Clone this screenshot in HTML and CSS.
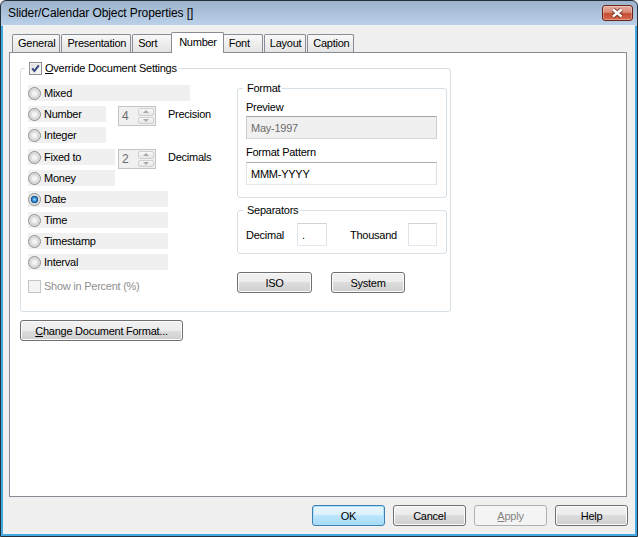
FILE: index.html
```html
<!DOCTYPE html>
<html lang="en">
<head>
  <meta charset="UTF-8">
  <title>Slider/Calendar Object Properties []</title>
  <link rel="stylesheet" href="styles.css">
</head>
<body>
  <div class="window">
    <div class="titlebar">
      <span class="title">Slider/Calendar Object Properties []</span>
      <button class="close" title="Close">
        <svg width="29" height="14" viewBox="0 0 29 14">
          <path d="M10 3.5 L18.5 10.5 M18.5 3.5 L10 10.5" stroke="#4a1b12" stroke-width="4.6" fill="none" opacity="0.6"/>
          <path d="M10 3.5 L18.5 10.5 M18.5 3.5 L10 10.5" stroke="#fff" stroke-width="2.4" fill="none"/>
        </svg>
      </button>
    </div>

    <div class="client">
      <div class="tabs">
        <div class="tab">General</div>
        <div class="tab">Presentation</div>
        <div class="tab">Sort</div>
        <div class="tab active">Number</div>
        <div class="tab">Font</div>
        <div class="tab">Layout</div>
        <div class="tab">Caption</div>
      </div>

      <div class="panel">
        <fieldset class="group main-group">
          <legend>
            <span class="check">
              <svg width="11" height="11" viewBox="0 0 11 11">
                <path d="M2.2 5.4 L4.4 8 L8.8 2.4" stroke="#33457e" stroke-width="2" fill="none"/>
              </svg>
            </span>
            <span><u>O</u>verride Document Settings</span>
          </legend>

          <div class="cols">
            <div class="types">
              <div class="opt-row">
                <label class="opt w-wide"><input type="radio" name="fmt">Mixed</label>
              </div>
              <div class="opt-row spin-row">
                <label class="opt w-short"><input type="radio" name="fmt">Number</label>
                <div class="spin">
                  <span class="spin-val">4</span>
                  <span class="spin-btns"><i class="up"></i><i class="down"></i></span>
                </div>
                <span class="spin-label">Precision</span>
              </div>
              <div class="opt-row">
                <label class="opt w-short"><input type="radio" name="fmt">Integer</label>
              </div>
              <div class="opt-row spin-row fixed">
                <label class="opt w-mid"><input type="radio" name="fmt">Fixed to</label>
                <div class="spin">
                  <span class="spin-val">2</span>
                  <span class="spin-btns"><i class="up"></i><i class="down"></i></span>
                </div>
                <span class="spin-label">Decimals</span>
              </div>
              <div class="opt-row">
                <label class="opt w-mid"><input type="radio" name="fmt">Money</label>
              </div>
              <div class="opt-row">
                <label class="opt w-long"><input type="radio" name="fmt" checked>Date</label>
              </div>
              <div class="opt-row">
                <label class="opt w-long"><input type="radio" name="fmt">Time</label>
              </div>
              <div class="opt-row">
                <label class="opt w-long"><input type="radio" name="fmt">Timestamp</label>
              </div>
              <div class="opt-row">
                <label class="opt w-long"><input type="radio" name="fmt">Interval</label>
              </div>
              <div class="percent">
                <span class="check disabled"></span>
                <span>Show in Percent (%)</span>
              </div>
            </div>

            <div class="format-col">
              <fieldset class="group fmt">
                <legend>Format</legend>
                <div class="lbl">Preview</div>
                <input class="field readonly" type="text" value="May-1997" readonly>
                <div class="lbl lbl-gap">Format Pattern</div>
                <input class="field pattern" type="text" value="MMM-YYYY">
              </fieldset>

              <fieldset class="group seps">
                <legend>Separators</legend>
                <div class="sep-row">
                  <span class="sep-lbl dec">Decimal</span>
                  <input class="field small" type="text" value=".">
                  <span class="sep-lbl thou">Thousand</span>
                  <input class="field small thin" type="text" value="">
                </div>
              </fieldset>

              <div class="fmt-buttons">
                <button class="btn iso">ISO</button>
                <button class="btn system">System</button>
              </div>
            </div>
          </div>
        </fieldset>

        <button class="btn change"><u>C</u>hange Document Format...</button>
      </div>

      <div class="footer">
        <button class="btn default">OK</button>
        <button class="btn">Cancel</button>
        <button class="btn" disabled><u>A</u>pply</button>
        <button class="btn">Help</button>
      </div>
    </div>
  </div>
</body>
</html>
```

FILE: styles.css
```css
* {
  box-sizing: border-box;
}

body {
  margin: 0;
  background: #f0f0f0;
  font-family: "Liberation Sans", Arial, sans-serif;
  font-size: 11px;
  letter-spacing: -0.25px;
  color: #000;
}

.window {
  width: 638px;
  height: 537px;
  border: 1px solid #22303d;
  border-radius: 6px 6px 0 0;
  background: linear-gradient(#9db3cc, #bcd2ea 25px, #44a9e1 25px);
  display: flex;
  flex-direction: column;
}

.titlebar {
  height: 24px;
  display: flex;
  align-items: flex-start;
  justify-content: space-between;
  padding-left: 7px;
}

.title {
  font-size: 12px;
  letter-spacing: -0.1px;
  line-height: 25px;
}

.close {
  width: 31px;
  height: 16px;
  margin: 4px 4px 0 0;
  padding: 0;
  border: 1px solid #6b2418;
  border-radius: 3px;
  background: linear-gradient(#e5ae9f, #d98a76 45%, #c44b30 55%, #d56b50);
  box-shadow: inset 0 0 0 1px rgba(255, 255, 255, 0.3);
}

.close svg {
  display: block;
}

.client {
  flex: 1;
  margin: 0 2px 2px;
  background: #f0f0f0;
  display: flex;
  flex-direction: column;
}

/* tabs */

.tabs {
  display: flex;
  align-items: flex-end;
  height: 20px;
  margin: 7px 0 0 9px;
}

.tab {
  height: 18px;
  min-width: 40px;
  padding: 0 4px 0 5px;
  margin-right: 1px;
  border: 1px solid #898c95;
  border-bottom: 0;
  border-radius: 2px 2px 0 0;
  background: linear-gradient(#f8f8f8, #e4e4e4);
  line-height: 17px;
  white-space: nowrap;
}

.tab.active {
  position: relative;
  z-index: 1;
  height: 21px;
  margin: 0 -1px -1px -2px;
  padding: 0 6px 0 7px;
  background: #fff;
  line-height: 18px;
}

.panel {
  width: 618px;
  height: 445px;
  margin-left: 6px;
  padding: 9px 0 0 10px;
  border: 1px solid #898c95;
  background: #fff;
}

/* group boxes */

.group {
  margin: 0;
  min-width: 0;
  border: 1px solid #d5dfe5;
  border-radius: 3px;
}

.group legend {
  margin-left: -3px;
  padding: 0 1px;
  line-height: 13px;
}

.main-group {
  width: 431px;
  padding: 7px 3px 17px 7px;
}

.main-group legend {
  display: flex;
  align-items: center;
  gap: 3px;
  padding: 0 2px 0 4px;
}

.cols {
  display: grid;
  grid-template-columns: 209px 210px;
}

.types {
  display: flex;
  flex-direction: column;
  gap: 5px;
  padding-top: 3px;
}

.opt-row {
  display: flex;
  height: 16px;
}

.opt-row.fixed {
  margin-top: 1px;
}

.spin-row {
  display: grid;
  grid-template-columns: 90px 38px auto;
  grid-template-rows: 16px;
  align-items: start;
}

.opt {
  display: flex;
  align-items: center;
  height: 16px;
  background: #f0f0f0;
}

.w-wide { width: 162px; }
.w-short { width: 78px; }
.w-mid { width: 87px; }
.w-long { width: 140px; }

.opt input {
  appearance: none;
  width: 13px;
  height: 13px;
  margin: 0 3px 0 0;
  border: 1px solid #8e8f8f;
  border-radius: 50%;
  background: radial-gradient(circle, #fbfbfb 0, #ececec 2.5px, #d2d2d2 4.5px, #f3f3f3 6px);
}

.opt input:checked {
  background: radial-gradient(circle, #b5e4fd 0, #3a93d8 1.8px, #11508f 3.4px, #d2d2d2 4px, #f3f3f3 6px);
}

.spin {
  height: 20px;
  display: flex;
  justify-content: space-between;
  padding: 1px;
  border: 1px solid #c4c4c4;
  background: #f0f0f0;
  color: #6d6d6d;
}

.spin-val {
  padding-left: 2px;
  line-height: 16px;
  font-size: 12px;
}

.spin-btns {
  width: 16px;
  display: flex;
  flex-direction: column;
  gap: 1px;
}

.spin-btns i {
  flex: 1;
  display: flex;
  align-items: center;
  justify-content: center;
  border: 1px solid #d0d0d0;
  border-radius: 2px;
  background: linear-gradient(#f8f8f8, #e6e6e6);
}

.spin-btns i::after {
  content: "";
  border-left: 3px solid transparent;
  border-right: 3px solid transparent;
  border-bottom: 3px solid #a9a9a9;
}

.spin-btns i.down::after {
  border-bottom: 0;
  border-top: 3px solid #a9a9a9;
}

.spin-label {
  margin-left: 12px;
  line-height: 16px;
}

.percent {
  display: flex;
  align-items: center;
  gap: 3px;
  height: 16px;
  margin-top: 3px;
  color: #8f8f8f;
}

.check {
  width: 13px;
  height: 13px;
  display: flex;
  align-items: center;
  justify-content: center;
  border: 1px solid #8e8f8f;
  background: linear-gradient(135deg, #dadada, #fdfdfd);
  box-shadow: inset 0 0 0 1px #f2f2f2;
}

.check.disabled {
  border-color: #c5c5c5;
  background: #f4f4f4;
  box-shadow: none;
}

/* format column */

.format-col {
  display: flex;
  flex-direction: column;
  align-items: flex-start;
}

.fmt {
  width: 210px;
  padding: 6px 9px 12px 8px;
}

.lbl {
  line-height: 13px;
}

.lbl-gap {
  margin-top: 7px;
}

.field {
  display: block;
  width: 191px;
  height: 23px;
  margin: 2px 0 0;
  padding: 0 4px;
  border: 1px solid;
  border-color: #abadb3 #dbdfe6 #e3e9ef #e2e3ea;
  background: #fff;
  font: inherit;
  letter-spacing: inherit;
  color: #000;
  outline: none;
}

.field.readonly {
  background: #f0f0f0;
  color: #6d6d6d;
  border-color: #a5a5a5 #cdcdcd #d6d6d6 #cdcdcd;
}

.field.pattern {
  margin-top: 3px;
}

.seps {
  width: 210px;
  margin-top: 6px;
  padding: 6px 9px 7px 8px;
}

.sep-row {
  display: flex;
  align-items: center;
  height: 23px;
}

.field.small {
  width: 30px;
  margin: 0;
  border-color: #cfd4da #dfe3e8 #e3e9ef #e2e3ea;
}

.field.small.thin {
  width: 29px;
}

.dec {
  width: 51px;
}

.thou {
  width: 58px;
  margin-left: 23px;
}

.fmt-buttons {
  display: flex;
  gap: 19px;
  margin-top: 18px;
}

/* buttons */

.btn {
  height: 21px;
  padding: 0;
  border: 1px solid #707070;
  border-radius: 3px;
  background: linear-gradient(#f2f2f2, #ebebeb 50%, #dddddd 50%, #cfcfcf);
  box-shadow: inset 0 0 0 1px #fbfbfb;
  font: inherit;
  letter-spacing: inherit;
  color: #000;
}

.btn.iso { width: 75px; }
.btn.system { width: 74px; }

.btn.change {
  width: 163px;
  margin-top: 8px;
}

.btn.default {
  border-color: #3c7fb1;
  background: linear-gradient(#eaf6fd, #d9f0fc 50%, #bee6fd 50%, #a7d9f5);
  box-shadow: inset 0 0 0 1px #a9e2fb;
}

.btn:disabled {
  border-color: #adb2b5;
  background: #f4f4f4;
  box-shadow: none;
  color: #838383;
}

.footer {
  display: flex;
  justify-content: flex-end;
  gap: 8px;
  padding: 8px 7px 0 0;
}

.footer .btn {
  width: 73px;
}
```
